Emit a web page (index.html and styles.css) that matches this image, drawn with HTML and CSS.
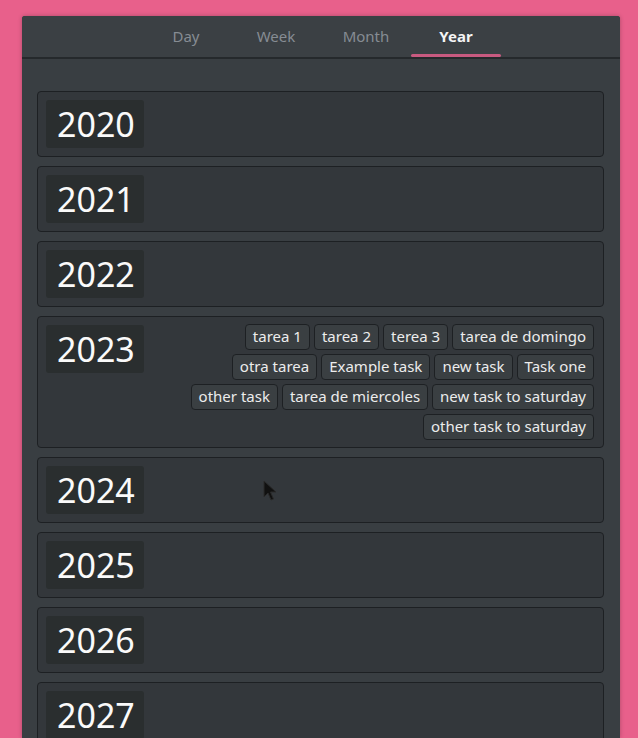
FILE: index.html
```html
<!DOCTYPE html>
<html lang="en">
<head>
<meta charset="utf-8">
<title>Year view</title>
<link rel="stylesheet" href="styles.css">
</head>
<body>
<div class="panel">
  <nav class="tabs">
    <div class="tab">Day</div>
    <div class="tab">Week</div>
    <div class="tab">Month</div>
    <div class="tab active">Year</div>
  </nav>
  <div class="content">
    <div class="year-row"><div class="year">2020</div></div>
    <div class="year-row"><div class="year">2021</div></div>
    <div class="year-row"><div class="year">2022</div></div>
    <div class="year-row">
      <div class="year">2023</div>
      <div class="tags">
        <span class="tag">tarea 1</span>
        <span class="tag">tarea 2</span>
        <span class="tag">terea 3</span>
        <span class="tag">tarea de domingo</span>
        <span class="tag">otra tarea</span>
        <span class="tag">Example task</span>
        <span class="tag">new task</span>
        <span class="tag">Task one</span>
        <span class="tag">other task</span>
        <span class="tag">tarea de miercoles</span>
        <span class="tag">new task to saturday</span>
        <span class="tag">other task to saturday</span>
      </div>
    </div>
    <div class="year-row"><div class="year">2024</div></div>
    <div class="year-row"><div class="year">2025</div></div>
    <div class="year-row"><div class="year">2026</div></div>
    <div class="year-row"><div class="year">2027</div></div>
  </div>
  <svg class="cursor" width="14" height="22" viewBox="0 0 14 22">
    <path d="M1 1 L1 17 L5 13 L8 20 L10.5 19 L7.5 12 L13 12 Z" fill="#111" stroke="#2a2a2a" stroke-width="1"/>
  </svg>
</div>
</body>
</html>
```

FILE: styles.css
```css
html, body {
  margin: 0;
  padding: 0;
}
body {
  background: #e8608b;
  font-family: "Noto Sans", "Open Sans", sans-serif;
  height: 738px;
  overflow: hidden;
}
.panel {
  position: relative;
  margin: 16px 0 0 22px;
  width: 598px;
  height: 722px;
  background: #393e42;
  border-radius: 3px 3px 0 0;
  overflow: hidden;
  box-shadow: 0 0 4px rgba(0,0,0,0.25);
}
.tabs {
  display: flex;
  justify-content: center;
  height: 41px;
  background: #3b4044;
  border-bottom: 2px solid #25292c;
}
.tab {
  width: 90px;
  text-align: center;
  color: #868c93;
  font-size: 15px;
  line-height: 40px;
  position: relative;
}
.tab.active {
  color: #f4f4f4;
  font-weight: 700;
}
.tab.active::after {
  content: "";
  position: absolute;
  left: 0;
  right: 0;
  bottom: 0;
  height: 3px;
  border-radius: 2px;
  background: #c85a80;
}
.content {
  display: flex;
  flex-direction: column;
  gap: 9px;
  padding: 32px 16px 0 15px;
}
.year-row {
  display: flex;
  align-items: flex-start;
  justify-content: space-between;
  gap: 20px;
  background: #33373b;
  border: 1.5px solid #1d2023;
  border-radius: 4px;
  padding: 8px 9px 8px 8px;
  min-height: 48px;
}
.year {
  flex: none;
  width: 98px;
  height: 48px;
  box-sizing: border-box;
  padding-left: 11px;
  background: #2a2e2f;
  border-radius: 3px;
  color: #fafafa;
  font-size: 34px;
  line-height: 48px;
}
.tags {
  flex: 1;
  display: flex;
  flex-wrap: wrap;
  justify-content: flex-end;
  gap: 4px;
  margin: -1px 0;
}
.tag {
  height: 26px;
  box-sizing: border-box;
  padding: 0 7px;
  background: #3a3f42;
  border: 1.5px solid #1d2023;
  border-radius: 4px;
  color: #ececec;
  font-size: 15px;
  line-height: 23px;
  white-space: nowrap;
}
.cursor {
  position: absolute;
  left: 241px;
  top: 464px;
}
```
